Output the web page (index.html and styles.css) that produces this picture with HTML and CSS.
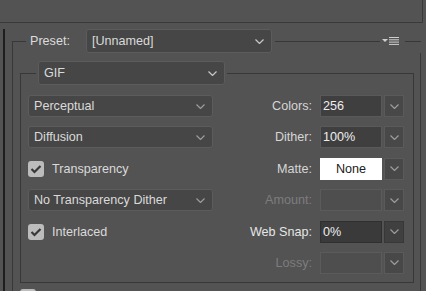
FILE: index.html
```html
<!DOCTYPE html>
<html lang="en">
<head>
    <meta charset="UTF-8">
    <meta name="viewport" content="width=device-width, initial-scale=1.0">
    <title>Save for Web - Settings</title>
    <link rel="stylesheet" href="styles.css">
</head>
<body>
    <!-- Top strip -->
    <div class="topbar"></div>

    <div class="frame">
        <fieldset class="outer">
            <legend class="preset-bar">
                <span class="preset-label">Preset:</span>
                <div class="select preset">
                    <span>[Unnamed]</span>
                    <svg class="chev" width="9" height="5" viewBox="0 0 9 5"><polyline points="0.5,0.5 4.5,4.5 8.5,0.5"/></svg>
                </div>
                <span class="rule first"></span>
                <svg class="menu-icon" width="17" height="8" viewBox="0 0 17 8">
                    <polygon points="0,2 6,2 3,5"/>
                    <rect x="7" y="0" width="10" height="1"/>
                    <rect x="7" y="2.3" width="10" height="1"/>
                    <rect x="7" y="4.6" width="10" height="1"/>
                    <rect x="7" y="6.9" width="10" height="1"/>
                </svg>
                <span class="rule last"></span>
            </legend>

            <fieldset class="inner">
                <legend class="format-bar">
                    <div class="select format">
                        <span>GIF</span>
                        <svg class="chev" width="9" height="5" viewBox="0 0 9 5"><polyline points="0.5,0.5 4.5,4.5 8.5,0.5"/></svg>
                    </div>
                </legend>

                <div class="settings">
                    <div class="select">
                        <span>Perceptual</span>
                        <svg class="chev dim" width="9" height="5" viewBox="0 0 9 5"><polyline points="0.5,0.5 4.5,4.5 8.5,0.5"/></svg>
                    </div>
                    <div class="field">
                        <span class="field-label">Colors:</span>
                        <div class="input">256</div>
                        <div class="drop"><svg class="chev dim" width="9" height="5" viewBox="0 0 9 5"><polyline points="0.5,0.5 4.5,4.5 8.5,0.5"/></svg></div>
                    </div>

                    <div class="select">
                        <span>Diffusion</span>
                        <svg class="chev dim" width="9" height="5" viewBox="0 0 9 5"><polyline points="0.5,0.5 4.5,4.5 8.5,0.5"/></svg>
                    </div>
                    <div class="field">
                        <span class="field-label">Dither:</span>
                        <div class="input">100%</div>
                        <div class="drop"><svg class="chev dim" width="9" height="5" viewBox="0 0 9 5"><polyline points="0.5,0.5 4.5,4.5 8.5,0.5"/></svg></div>
                    </div>

                    <label class="check-row">
                        <span class="checkbox"><svg width="12" height="10" viewBox="0 0 12 10"><polyline points="1.5,5 4.5,8 10.5,2"/></svg></span>
                        <span>Transparency</span>
                    </label>
                    <div class="field">
                        <span class="field-label">Matte:</span>
                        <div class="input matte">None</div>
                        <div class="drop"><svg class="chev dim" width="9" height="5" viewBox="0 0 9 5"><polyline points="0.5,0.5 4.5,4.5 8.5,0.5"/></svg></div>
                    </div>

                    <div class="select">
                        <span>No Transparency Dither</span>
                        <svg class="chev dim" width="9" height="5" viewBox="0 0 9 5"><polyline points="0.5,0.5 4.5,4.5 8.5,0.5"/></svg>
                    </div>
                    <div class="field disabled">
                        <span class="field-label">Amount:</span>
                        <div class="input"></div>
                        <div class="drop"><svg class="chev dim" width="9" height="5" viewBox="0 0 9 5"><polyline points="0.5,0.5 4.5,4.5 8.5,0.5"/></svg></div>
                    </div>

                    <label class="check-row">
                        <span class="checkbox"><svg width="12" height="10" viewBox="0 0 12 10"><polyline points="1.5,5 4.5,8 10.5,2"/></svg></span>
                        <span>Interlaced</span>
                    </label>
                    <div class="field active">
                        <span class="field-label">Web Snap:</span>
                        <div class="input">0%</div>
                        <div class="drop"><svg class="chev dim" width="9" height="5" viewBox="0 0 9 5"><polyline points="0.5,0.5 4.5,4.5 8.5,0.5"/></svg></div>
                    </div>

                    <div></div>
                    <div class="field disabled">
                        <span class="field-label">Lossy:</span>
                        <div class="input"></div>
                        <div class="drop"><svg class="chev dim" width="9" height="5" viewBox="0 0 9 5"><polyline points="0.5,0.5 4.5,4.5 8.5,0.5"/></svg></div>
                    </div>
                </div>
            </fieldset>

            <!-- next option, only its top edge is in view -->
            <div class="check-row extra">
                <span class="checkbox"></span>
            </div>
        </fieldset>
    </div>
</body>
</html>
```

FILE: styles.css
```css
body {
    margin: 0;
    width: 426px;
    height: 291px;
    overflow: hidden;
    background-color: #535353;
    font-family: "Liberation Sans", Arial, sans-serif;
    font-size: 12.6px;
    color: #d8d8d8;
}

/* Top strip */
.topbar {
    width: 422px;
    height: 22px;
    border-bottom: 1px solid #3a3a3a;
    border-right: 1px solid #3a3a3a;
}

/* Dark edge on the left */
.frame {
    margin-left: 3px;
    padding-left: 7px;
    border-left: 2px solid #1e1e1e;
    height: 268px;
}

/* Outer group (Preset) */
.outer {
    box-sizing: border-box;
    width: 409px;
    min-width: 0;
    margin: 6px 0 0 0;
    padding: 0 0 0 7px;
    border: 1px solid #383838;
    border-bottom: none;
    height: 300px;
}

.preset-bar {
    box-sizing: border-box;
    display: flex;
    align-items: center;
    width: 395px;
    height: 24px;
    margin-left: 6px;
    padding: 0 0 0 4px;
}

.preset-label {
    width: 56px;
    color: #dcdcdc;
}

.rule {
    flex: 1;
    height: 1px;
    background-color: #383838;
}

.rule.first {
    margin-left: 3px;
}

.rule.last {
    flex: none;
    width: 16px;
}

.menu-icon {
    margin: 0 6px 0 2px;
    fill: #cfcfcf;
}

/* Dropdowns */
.select {
    box-sizing: border-box;
    display: flex;
    align-items: center;
    justify-content: space-between;
    height: 22px;
    padding: 0 7px 0 5px;
    background-color: #464646;
    border: 1px solid #5c5c5c;
    border-radius: 3px;
    color: #dadada;
}

.select.preset {
    width: 186px;
    height: 24px;
}

.select.format {
    width: 187px;
    height: 24px;
}

.chev {
    fill: none;
    stroke: #c8c8c8;
    stroke-width: 1.2;
}

.chev.dim {
    stroke: #9c9c9c;
}

/* Inner group (format settings) */
.inner {
    box-sizing: border-box;
    width: 394px;
    min-width: 0;
    margin: 8px 0 0 0;
    padding: 10px 9px 8px 7px;
    border: 1px solid #383838;
}

.format-bar {
    margin-left: 8px;
    padding: 0 2px;
}

.settings {
    display: grid;
    grid-template-columns: 185px 1fr;
    grid-auto-rows: 22px;
    row-gap: 9.4px;
}

/* Checkboxes */
.check-row {
    display: flex;
    align-items: center;
    gap: 8px;
    color: #dadada;
}

.checkbox {
    display: flex;
    align-items: center;
    justify-content: center;
    width: 16px;
    height: 16px;
    border-radius: 3px;
    background-color: #bcbcbc;
}

.checkbox svg {
    fill: none;
    stroke: #383838;
    stroke-width: 2.2;
}

.check-row.extra {
    margin-top: 6px;
}

/* Label + value + dropdown button */
.field {
    display: flex;
    align-items: center;
    justify-content: flex-end;
}

.field-label {
    margin-right: 8px;
    color: #d6d6d6;
}

.input {
    box-sizing: border-box;
    width: 62px;
    height: 22px;
    padding-left: 2px;
    line-height: 20px;
    background-color: #3f3f3f;
    border: 1px solid #595959;
    color: #eeeeee;
}

.input.matte {
    background-color: #ffffff;
    border-color: #ffffff;
    color: #202020;
    text-align: center;
    padding-left: 0;
}

.drop {
    box-sizing: border-box;
    display: flex;
    align-items: center;
    justify-content: center;
    width: 20px;
    height: 22px;
    margin-left: 2px;
    background-color: #484848;
    border: 1px solid #5a5a5a;
}

.field.disabled .field-label {
    color: #7d7d7d;
}

.field.disabled .input {
    background-color: #4e4e4e;
    border-color: #5b5b5b;
}

.field.active .field-label {
    color: #e6e6e6;
}

.field.active .input {
    background-color: #3a3a3a;
    border-color: #303030;
}

.field.active .drop {
    background-color: #404040;
    border-color: #383838;
}
```
